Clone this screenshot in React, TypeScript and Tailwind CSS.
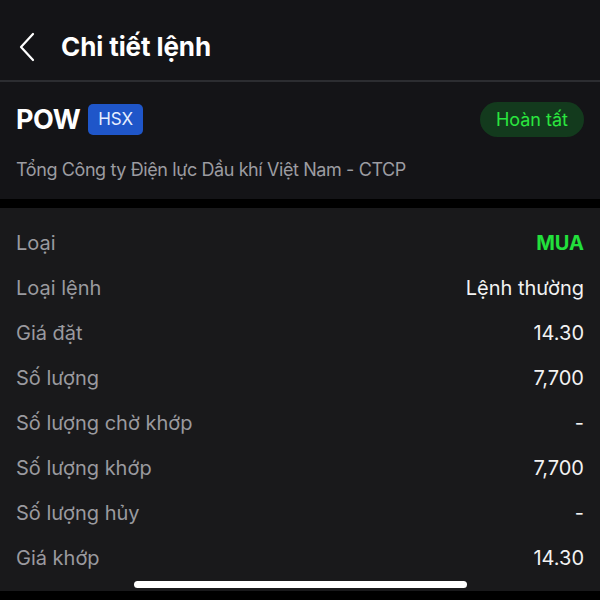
const rows = [
  { label: 'Loại', value: 'MUA', buy: true },
  { label: 'Loại lệnh', value: 'Lệnh thường' },
  { label: 'Giá đặt', value: '14.30' },
  { label: 'Số lượng', value: '7,700' },
  { label: 'Số lượng chờ khớp', value: '-' },
  { label: 'Số lượng khớp', value: '7,700' },
  { label: 'Số lượng hủy', value: '-' },
  { label: 'Giá khớp', value: '14.30' },
];

function BackIcon() {
  return (
    <svg width="18" height="30" viewBox="0 0 18 30" fill="none" className="text-white">
      <path d="M15 2 L3 15 L15 28" stroke="currentColor" strokeWidth="2.2" strokeLinecap="round" strokeLinejoin="round" />
    </svg>
  );
}

export default function App() {
  return (
    <div className="relative w-[600px] h-[600px] overflow-hidden bg-black font-['Inter','Liberation_Sans',sans-serif]">
      {/* Header */}
      <div className="h-[82px] bg-[#141417] flex items-center pb-[2px] pl-[18px] border-b-2 border-[#2c2d31]">
        <div className="mt-[16px] flex items-center">
          <BackIcon />
          <h1 className="ml-[25px] text-[26px] leading-[34px] font-bold text-white tracking-[-0.1px]">Chi tiết lệnh</h1>
        </div>
      </div>

      {/* Stock info */}
      <div className="h-[117px] bg-[#141417] px-[16px] pt-[20px]">
        <div className="flex items-center justify-between">
          <div className="flex items-center gap-[8px]">
            <span className="text-[27px] font-bold text-white leading-none tracking-[-0.5px]">POW</span>
            <span className="h-[31px] px-[10px] flex items-center rounded-[5px] bg-[#1f56c9] text-[#e6eeff] text-[17px]">HSX</span>
          </div>
          <span className="h-[35px] px-[16px] flex items-center rounded-full bg-[#133a1d] text-[#2ae63f] text-[18px]">Hoàn tất</span>
        </div>
        <p className="mt-[19px] text-[18px] text-[#9c9ca1] tracking-[-0.4px]">Tổng Công ty Điện lực Dầu khí Việt Nam - CTCP</p>
      </div>

      <div className="h-[9px] bg-black" />

      {/* Details */}
      <div className="h-[383px] bg-[#19191b] pt-[12px] px-[16px]">
        {rows.map((r) => (
          <div key={r.label} className="h-[45px] flex items-center justify-between text-[20px]">
            <span className="text-[#9a9a9f]">{r.label}</span>
            <span className={r.buy ? 'font-bold text-[#22e03c]' : 'text-[#f2f2f2]'}>{r.value}</span>
          </div>
        ))}
      </div>

      <div className="absolute left-[134px] top-[581px] w-[333px] h-[7px] rounded-full bg-white" />
    </div>
  );
}
